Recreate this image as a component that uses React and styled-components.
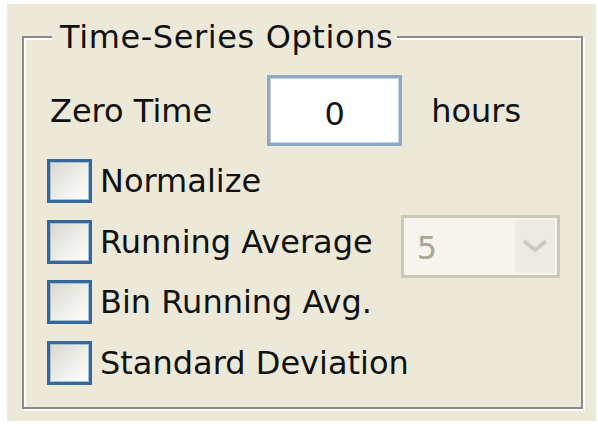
import React from "react";
import styled, { createGlobalStyle } from "styled-components";

const GlobalStyle = createGlobalStyle`
  html, body {
    margin: 0;
    padding: 0;
    background: #ffffff;
  }
  body {
    font-family: "DejaVu Sans", "Liberation Sans", sans-serif;
    color: #111;
  }
`;

const Panel = styled.div`
  box-sizing: border-box;
  width: 589px;
  height: 417px;
  margin: 4px 2px 3px 7px;
  padding: 17px 13px 0 15px;
  background: #ece9d8;
`;

const Group = styled.fieldset`
  box-sizing: border-box;
  margin: 0;
  padding: 0;
  min-width: 0;
  width: 561px;
  border: 2px solid #8b8b85;
  box-shadow: 2px 2px 0 #ffffff, inset 2px 2px 0 #ffffff;
`;

const Legend = styled.legend`
  margin-left: 28px;
  padding: 0 4px 0 8px;
  font-size: 32px;
  line-height: 32px;
  letter-spacing: 0.6px;
  background: #ece9d8;
  color: #111;
`;

const Content = styled.div`
  padding: 22px 16px 14px 23px;
`;

const TimeRow = styled.div`
  display: flex;
  align-items: center;
  height: 71px;
  margin-left: 3px;
`;

const Text = styled.span`
  font-size: 32px;
  line-height: 32px;
  white-space: nowrap;
  color: ${(p) => (p.$disabled ? "#a8a598" : "#111")};
  margin-left: ${(p) => p.$ml || 0}px;
`;

const NumberBox = styled.div`
  box-sizing: border-box;
  width: 135px;
  height: 71px;
  margin-left: 55px;
  border: 3px solid #8fa9c4;
  box-shadow: inset 0 0 0 1px #c3d3e3;
  background: #ffffff;
  display: flex;
  align-items: center;
  justify-content: center;
  padding-top: 6px;
  font-size: 32px;
  color: #111;
`;

const CheckList = styled.div`
  margin-top: 5px;
  display: flex;
  flex-direction: column;
`;

const CheckRow = styled.div`
  display: flex;
  align-items: center;
  height: 60.5px;
`;

const Box = styled.span`
  box-sizing: border-box;
  flex: none;
  width: 45px;
  height: 44px;
  margin-right: 8px;
  border: 3px solid #35679a;
  box-shadow: inset 0 0 0 1px #a9bfd6;
  background: linear-gradient(135deg, #d8d8d0 0%, #efefea 55%, #ffffff 100%);
`;

const Select = styled.div`
  box-sizing: border-box;
  flex: none;
  width: 159px;
  height: 63px;
  margin-left: 28px;
  margin-top: 9px;
  border: 3px solid #cbc8b8;
  background: #f6f4ec;
  display: flex;
  align-items: stretch;
  padding: 2px;
`;

const SelectValue = styled.span`
  flex: 1;
  display: flex;
  align-items: center;
  padding-left: 11px;
  padding-top: 3px;
  font-size: 32px;
  color: #aaa799;
`;

const SelectButton = styled.span`
  flex: none;
  width: 40px;
  border-radius: 4px;
  background: #ecebe3;
  display: flex;
  align-items: center;
  justify-content: center;
`;

const Chevron = () => (
  <svg width="28" height="16" viewBox="0 0 28 16">
    <path d="M3 3 L14 12 L25 3" fill="none" stroke="#cdcbc0" strokeWidth="4" />
  </svg>
);

const Check = ({ label, children }) => (
  <CheckRow>
    <Box />
    <Text>{label}</Text>
    {children}
  </CheckRow>
);

export default function App() {
  return (
    <>
      <GlobalStyle />
      <Panel>
        <Group>
          <Legend>Time-Series Options</Legend>
          <Content>
            <TimeRow>
              <Text>Zero Time</Text>
              <NumberBox>0</NumberBox>
              <Text $ml={29}>hours</Text>
            </TimeRow>
            <CheckList>
              <Check label="Normalize" />
              <Check label="Running Average">
                <Select>
                  <SelectValue>5</SelectValue>
                  <SelectButton>
                    <Chevron />
                  </SelectButton>
                </Select>
              </Check>
              <Check label="Bin Running Avg." />
              <Check label="Standard Deviation" />
            </CheckList>
          </Content>
        </Group>
      </Panel>
    </>
  );
}
